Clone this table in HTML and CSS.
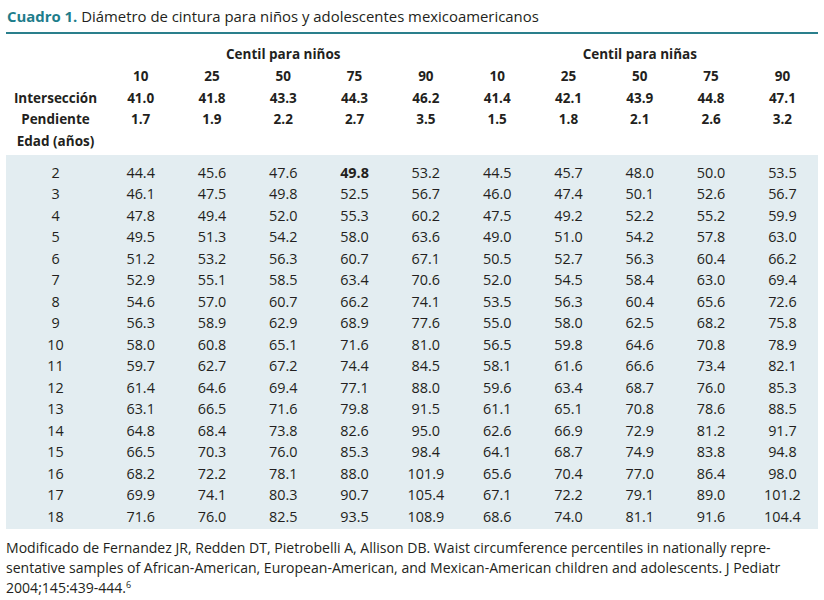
FILE: index.html
```html
<!DOCTYPE html>
<html lang="es">
<head>
<meta charset="utf-8">
<title>Cuadro 1</title>
<link rel="stylesheet" href="styles.css">
</head>
<body>
<div class="page">
  <h1 class="caption"><span class="cap-num">Cuadro 1.</span> Diámetro de cintura para niños y adolescentes mexicoamericanos</h1>
  <table class="data">
    <colgroup>
      <col class="c-label">
      <col span="10" class="c-val">
    </colgroup>
    <thead>
      <tr class="group">
        <th></th>
        <th colspan="5">Centil para niños</th>
        <th colspan="5">Centil para niñas</th>
      </tr>
      <tr>
        <th></th>
        <th>10</th><th>25</th><th>50</th><th>75</th><th>90</th>
        <th>10</th><th>25</th><th>50</th><th>75</th><th>90</th>
      </tr>
      <tr>
        <th>Intersección</th>
        <th>41.0</th><th>41.8</th><th>43.3</th><th>44.3</th><th>46.2</th>
        <th>41.4</th><th>42.1</th><th>43.9</th><th>44.8</th><th>47.1</th>
      </tr>
      <tr>
        <th>Pendiente</th>
        <th>1.7</th><th>1.9</th><th>2.2</th><th>2.7</th><th>3.5</th>
        <th>1.5</th><th>1.8</th><th>2.1</th><th>2.6</th><th>3.2</th>
      </tr>
      <tr class="last-head">
        <th>Edad (años)</th>
        <th></th><th></th><th></th><th></th><th></th>
        <th></th><th></th><th></th><th></th><th></th>
      </tr>
    </thead>
    <tbody>
      <tr class="first"><td>2</td><td>44.4</td><td>45.6</td><td>47.6</td><td class="strong">49.8</td><td>53.2</td><td>44.5</td><td>45.7</td><td>48.0</td><td>50.0</td><td>53.5</td></tr>
      <tr><td>3</td><td>46.1</td><td>47.5</td><td>49.8</td><td>52.5</td><td>56.7</td><td>46.0</td><td>47.4</td><td>50.1</td><td>52.6</td><td>56.7</td></tr>
      <tr><td>4</td><td>47.8</td><td>49.4</td><td>52.0</td><td>55.3</td><td>60.2</td><td>47.5</td><td>49.2</td><td>52.2</td><td>55.2</td><td>59.9</td></tr>
      <tr><td>5</td><td>49.5</td><td>51.3</td><td>54.2</td><td>58.0</td><td>63.6</td><td>49.0</td><td>51.0</td><td>54.2</td><td>57.8</td><td>63.0</td></tr>
      <tr><td>6</td><td>51.2</td><td>53.2</td><td>56.3</td><td>60.7</td><td>67.1</td><td>50.5</td><td>52.7</td><td>56.3</td><td>60.4</td><td>66.2</td></tr>
      <tr><td>7</td><td>52.9</td><td>55.1</td><td>58.5</td><td>63.4</td><td>70.6</td><td>52.0</td><td>54.5</td><td>58.4</td><td>63.0</td><td>69.4</td></tr>
      <tr><td>8</td><td>54.6</td><td>57.0</td><td>60.7</td><td>66.2</td><td>74.1</td><td>53.5</td><td>56.3</td><td>60.4</td><td>65.6</td><td>72.6</td></tr>
      <tr><td>9</td><td>56.3</td><td>58.9</td><td>62.9</td><td>68.9</td><td>77.6</td><td>55.0</td><td>58.0</td><td>62.5</td><td>68.2</td><td>75.8</td></tr>
      <tr><td>10</td><td>58.0</td><td>60.8</td><td>65.1</td><td>71.6</td><td>81.0</td><td>56.5</td><td>59.8</td><td>64.6</td><td>70.8</td><td>78.9</td></tr>
      <tr><td>11</td><td>59.7</td><td>62.7</td><td>67.2</td><td>74.4</td><td>84.5</td><td>58.1</td><td>61.6</td><td>66.6</td><td>73.4</td><td>82.1</td></tr>
      <tr><td>12</td><td>61.4</td><td>64.6</td><td>69.4</td><td>77.1</td><td>88.0</td><td>59.6</td><td>63.4</td><td>68.7</td><td>76.0</td><td>85.3</td></tr>
      <tr><td>13</td><td>63.1</td><td>66.5</td><td>71.6</td><td>79.8</td><td>91.5</td><td>61.1</td><td>65.1</td><td>70.8</td><td>78.6</td><td>88.5</td></tr>
      <tr><td>14</td><td>64.8</td><td>68.4</td><td>73.8</td><td>82.6</td><td>95.0</td><td>62.6</td><td>66.9</td><td>72.9</td><td>81.2</td><td>91.7</td></tr>
      <tr><td>15</td><td>66.5</td><td>70.3</td><td>76.0</td><td>85.3</td><td>98.4</td><td>64.1</td><td>68.7</td><td>74.9</td><td>83.8</td><td>94.8</td></tr>
      <tr><td>16</td><td>68.2</td><td>72.2</td><td>78.1</td><td>88.0</td><td>101.9</td><td>65.6</td><td>70.4</td><td>77.0</td><td>86.4</td><td>98.0</td></tr>
      <tr><td>17</td><td>69.9</td><td>74.1</td><td>80.3</td><td>90.7</td><td>105.4</td><td>67.1</td><td>72.2</td><td>79.1</td><td>89.0</td><td>101.2</td></tr>
      <tr class="last"><td>18</td><td>71.6</td><td>76.0</td><td>82.5</td><td>93.5</td><td>108.9</td><td>68.6</td><td>74.0</td><td>81.1</td><td>91.6</td><td>104.4</td></tr>
    </tbody>
  </table>
  <p class="note">Modificado de Fernandez JR, Redden DT, Pietrobelli A, Allison DB. Waist circumference percentiles in nationally repre-<br>sentative samples of African-American, European-American, and Mexican-American children and adolescents. J Pediatr<br>2004;145:439-444.<sup>6</sup></p>
</div>
</body>
</html>
```
FILE: styles.css
```css
html, body {
  margin: 0;
  padding: 0;
  background: #ffffff;
}

body {
  font-family: "Open Sans", "Lato", sans-serif;
  color: #231f20;
}

.page {
  width: 812px;
  padding: 0 6px;
}

.caption {
  margin: 0;
  padding: 6px 0 0 1px;
  height: 26px;
  font-size: 14.9px;
  font-weight: 400;
  line-height: 20px;
  border-bottom: 2px solid #2a7f8c;
}

.cap-num {
  color: #1e7d8b;
  font-weight: 700;
}

.data {
  width: 812px;
  border-collapse: collapse;
  table-layout: fixed;
  margin-top: 8px;
  font-size: 14px;
}

.c-label {
  width: 99px;
}

.c-val {
  width: 71.3px;
}

.data th,
.data td {
  padding: 0;
  text-align: center;
  line-height: 21.5px;
  height: 21.5px;
}

.data th {
  font-weight: 700;
  font-size: 13.5px;
}

.data .group th {
  height: 24px;
  line-height: 24px;
}

.data .last-head th {
  height: 22px;
  padding-bottom: 2px;
}

.data tbody td {
  background: #e3edf1;
  font-weight: 400;
  font-size: 14.4px;
}

.data tbody .first td {
  padding-top: 7px;
}

.data tbody .last td {
  padding-bottom: 2px;
}

.data td.strong {
  font-weight: 700;
}

.note {
  margin: 9px 0 0;
  font-size: 14.05px;
  line-height: 20px;
}

.note sup {
  font-size: 9px;
  line-height: 0;
  vertical-align: 5px;
}
```
